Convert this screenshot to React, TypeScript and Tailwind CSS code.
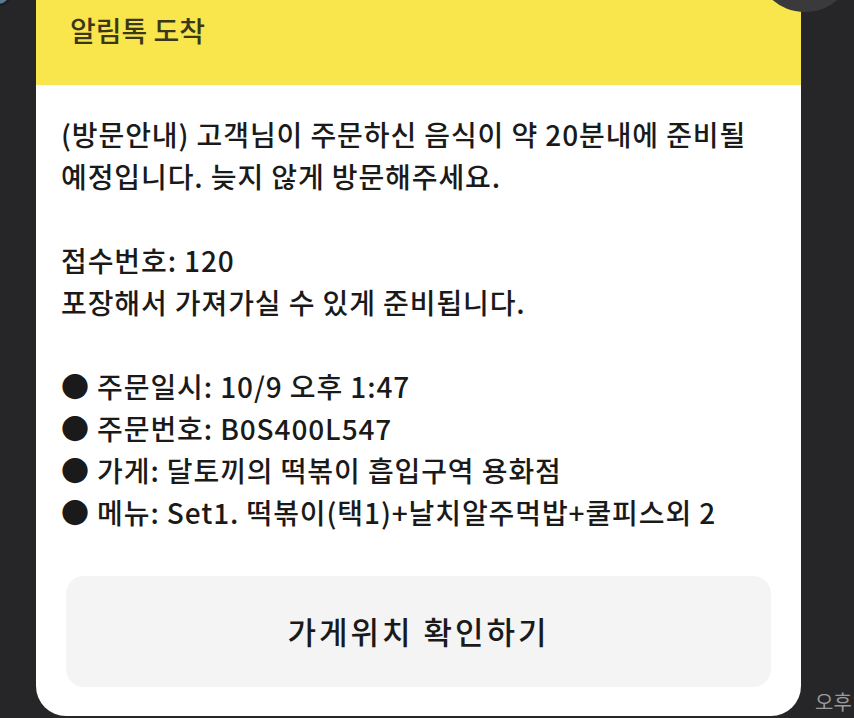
const font = { fontFamily: '"Noto Sans CJK KR", "Noto Sans", sans-serif' };

const notice = [
  ["(방문안내) 고객님이 주문하신 음식이 약 20분내에 준비될", "예정입니다. 늦지 않게 방문해주세요."],
  ["접수번호: 120", "포장해서 가져가실 수 있게 준비됩니다."],
  [
    "● 주문일시: 10/9 오후 1:47",
    "● 주문번호: B0S400L547",
    "● 가게: 달토끼의 떡볶이 흡입구역 용화점",
    "● 메뉴: Set1. 떡볶이(택1)+날치알주먹밥+쿨피스외 2",
  ],
];

export default function App() {
  return (
    <div
      className="relative h-[718px] w-[854px] overflow-hidden bg-[#262628]"
      style={font}
    >
      <div className="absolute -left-[16px] -top-[22px] h-[28px] w-[28px] rounded-full border-2 border-[#1c1c1e] bg-[#5b7a8e]" />

      <div className="ml-[36px] flex h-[716px] w-[765px] flex-col overflow-hidden rounded-b-[30px] bg-white">
        <div className="h-[85px] bg-[#f9e54c] pl-[34px] pt-[9px]">
          <h1 className="text-[28px] font-medium leading-[42px] text-[#3b3819]">알림톡 도착</h1>
        </div>

        <div className="flex flex-1 flex-col px-[25px] pt-[28px] text-[28px] font-medium leading-[42px] tracking-[0.9px] text-[#1a1a1a]">
          {notice.map((block, i) => (
            <div key={i} className={i > 0 ? "mt-[42px]" : ""}>
              {block.map((line) => (
                <p key={line} className="whitespace-nowrap">
                  {line}
                </p>
              ))}
            </div>
          ))}
        </div>

        <div className="px-[30px] pb-[29px]">
          <button className="flex h-[111px] w-full items-center justify-center rounded-[18px] bg-[#f4f4f4] text-[31px] font-medium tracking-[3px] text-[#1a1a1a]">
            가게위치 확인하기
          </button>
        </div>
      </div>

      <div className="absolute left-[755px] -top-[88px] h-[100px] w-[100px] rounded-full bg-[#3a3a3c]" />
      <span className="absolute left-[815px] top-[687px] text-[20px] text-[#9a9a9a]">오후</span>
    </div>
  );
}
